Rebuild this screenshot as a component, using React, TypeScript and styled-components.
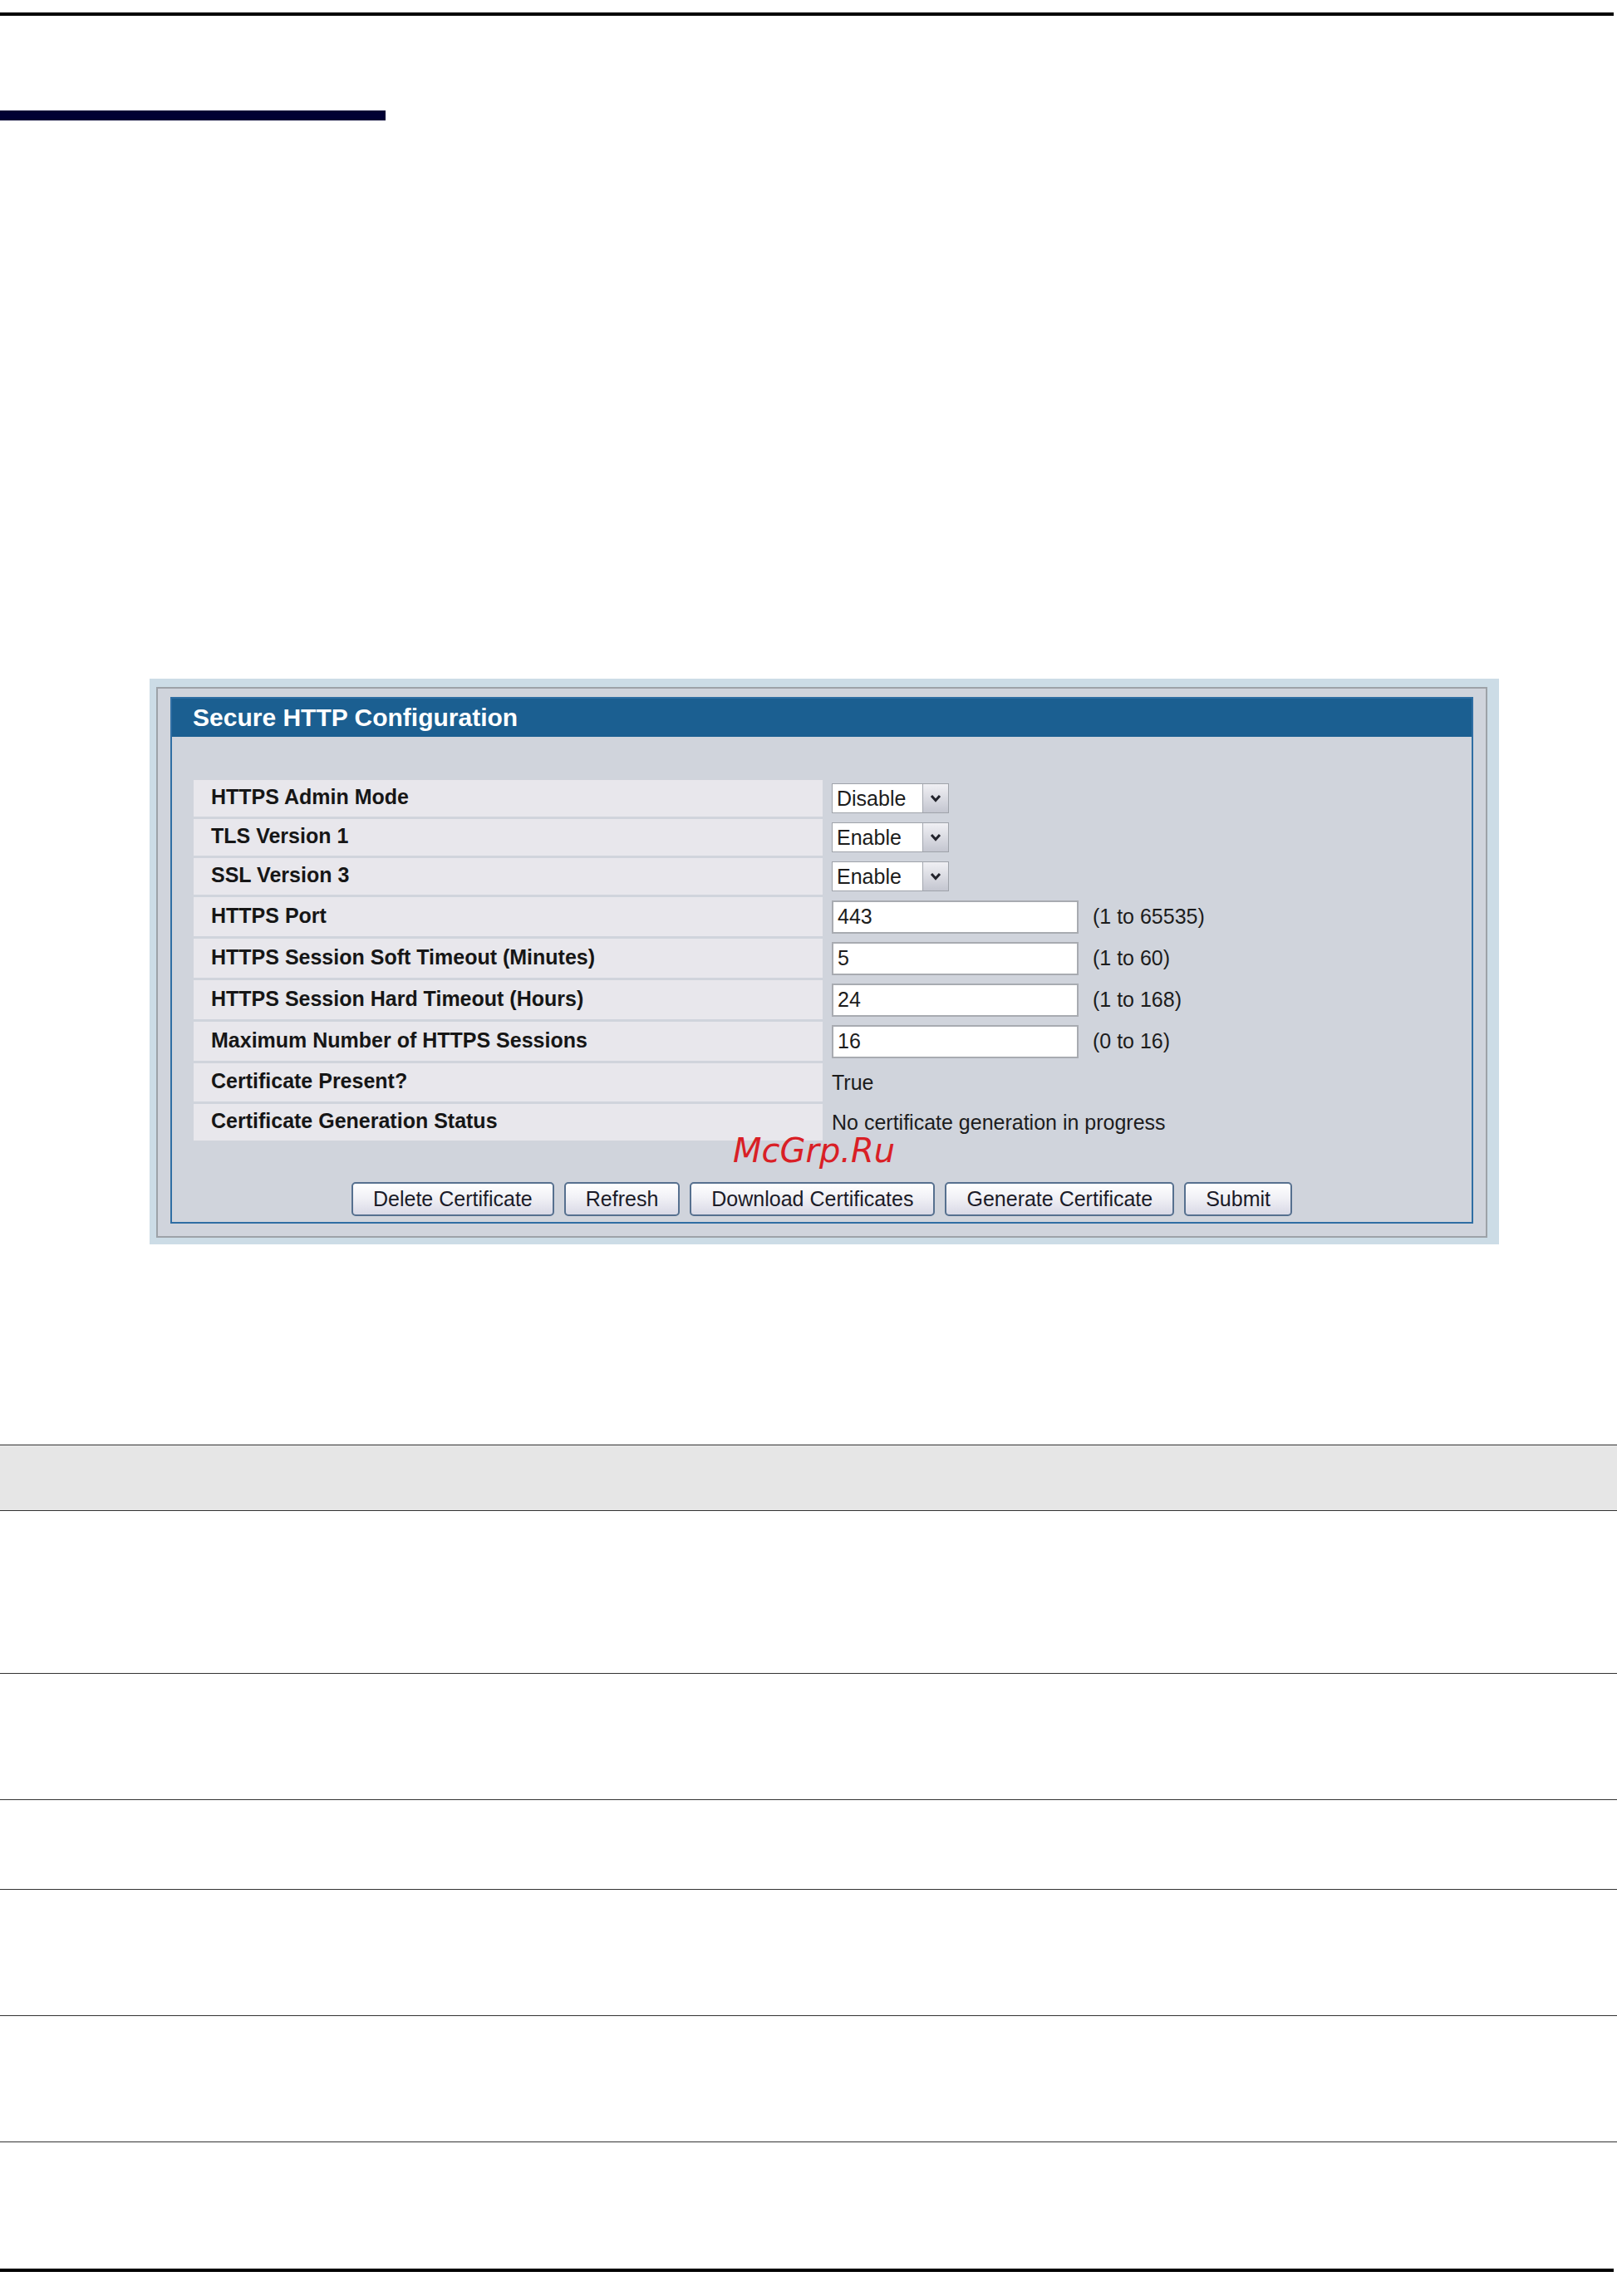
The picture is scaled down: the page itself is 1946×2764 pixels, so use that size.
import React from "react";
import styled, { createGlobalStyle } from "styled-components";

const GlobalStyle = createGlobalStyle`
  html, body {
    margin: 0;
    padding: 0;
    background: #ffffff;
  }
  body {
    font-family: "Liberation Sans", Arial, sans-serif;
    color: #1a1a1a;
  }
`;

type Field =
  | { label: string; kind: "select"; value: string }
  | { label: string; kind: "input"; value: string; hint: string }
  | { label: string; kind: "text"; value: string };

const fields: Field[] = [
  { label: "HTTPS Admin Mode", kind: "select", value: "Disable" },
  { label: "TLS Version 1", kind: "select", value: "Enable" },
  { label: "SSL Version 3", kind: "select", value: "Enable" },
  { label: "HTTPS Port", kind: "input", value: "443", hint: "(1 to 65535)" },
  { label: "HTTPS Session Soft Timeout (Minutes)", kind: "input", value: "5", hint: "(1 to 60)" },
  { label: "HTTPS Session Hard Timeout (Hours)", kind: "input", value: "24", hint: "(1 to 168)" },
  { label: "Maximum Number of HTTPS Sessions", kind: "input", value: "16", hint: "(0 to 16)" },
  { label: "Certificate Present?", kind: "text", value: "True" },
  { label: "Certificate Generation Status", kind: "text", value: "No certificate generation in progress" },
];

const buttons = [
  "Delete Certificate",
  "Refresh",
  "Download Certificates",
  "Generate Certificate",
  "Submit",
];

// heights of the table rows below the screenshot
const docRows = [196, 152, 108, 152, 152, 152];

const rowHeight = (kind: Field["kind"], index: number) => {
  if (kind === "select") return 44;
  if (kind === "input") return 47;
  return index === fields.length - 1 ? 44 : 46;
};

const App: React.FC = () => {
  return (
    <Page>
      <GlobalStyle />
      <TopRule />
      <SectionBar />

      <Screenshot>
        <Frame>
          <Box>
            <BoxHeader>Secure HTTP Configuration</BoxHeader>
            <BoxBody>
              <FieldGrid>
                {fields.map((f, i) => (
                  <React.Fragment key={f.label}>
                    <LabelCell $h={rowHeight(f.kind, i)}>{f.label}</LabelCell>
                    <ValueCell $h={rowHeight(f.kind, i)}>
                      {f.kind === "select" && (
                        <FakeSelect>
                          <SelectText>{f.value}</SelectText>
                          <SelectArrow>
                            <svg width="14" height="10" viewBox="0 0 14 10">
                              <path
                                d="M2 2 L7 7.5 L12 2"
                                fill="none"
                                stroke="#22232b"
                                strokeWidth="3"
                              />
                            </svg>
                          </SelectArrow>
                        </FakeSelect>
                      )}
                      {f.kind === "input" && (
                        <>
                          <TextBox>{f.value}</TextBox>
                          <Hint>{f.hint}</Hint>
                        </>
                      )}
                      {f.kind === "text" && <PlainValue>{f.value}</PlainValue>}
                    </ValueCell>
                  </React.Fragment>
                ))}
              </FieldGrid>
              <ButtonRow>
                {buttons.map((b) => (
                  <FormButton key={b}>{b}</FormButton>
                ))}
              </ButtonRow>
            </BoxBody>
            <Watermark>McGrp.Ru</Watermark>
          </Box>
        </Frame>
      </Screenshot>

      <DocTable>
        <DocHead />
        {docRows.map((h, i) => (
          <DocRow key={i} $h={h} />
        ))}
      </DocTable>
      <BottomRule />
    </Page>
  );
};

const Page = styled.div`
  width: 1946px;
  min-height: 2764px;
  overflow: hidden;
`;

const TopRule = styled.div`
  margin-top: 15px;
  width: 1942px;
  height: 4px;
  background: #000000;
`;

const SectionBar = styled.div`
  margin-top: 114px;
  width: 464px;
  height: 12px;
  background: #000033;
`;

const Screenshot = styled.div`
  margin-top: 672px;
  margin-left: 180px;
  width: 1624px;
  padding: 10px 14px 8px 8px;
  box-sizing: border-box;
  background: #ccdce6;
`;

const Frame = styled.div`
  border: 2px solid #9da2a8;
  background: #d0d4dc;
  padding: 10px 15px 15px 15px;
`;

const Box = styled.div`
  position: relative;
  border: 2px solid #2f6ea3;
  background: #d0d4dc;
`;

const BoxHeader = styled.div`
  height: 46px;
  display: flex;
  align-items: center;
  padding-left: 25px;
  background: #1b5f91;
  color: #ffffff;
  font-size: 30px;
  font-weight: bold;
`;

const BoxBody = styled.div`
  padding: 52px 26px 7px 26px;
`;

const FieldGrid = styled.div`
  display: grid;
  grid-template-columns: 757px 1fr;
  column-gap: 3px;
  row-gap: 3px;
`;

const LabelCell = styled.div<{ $h: number }>`
  height: ${(p) => p.$h}px;
  display: flex;
  align-items: center;
  padding-left: 21px;
  padding-bottom: 3px;
  box-sizing: border-box;
  background: #e8e7ec;
  font-size: 25px;
  font-weight: bold;
  color: #161616;
`;

const ValueCell = styled.div<{ $h: number }>`
  height: ${(p) => p.$h}px;
  display: flex;
  align-items: center;
  padding-left: 8px;
  font-size: 25px;
  color: #1c1c1c;
`;

const FakeSelect = styled.div`
  width: 141px;
  height: 36px;
  box-sizing: border-box;
  display: flex;
  align-items: stretch;
  border: 1px solid #9fa3aa;
  background: #ffffff;
`;

const SelectText = styled.span`
  flex: 1;
  display: flex;
  align-items: center;
  padding-left: 5px;
  font-size: 25px;
`;

const SelectArrow = styled.span`
  width: 30px;
  display: flex;
  align-items: center;
  justify-content: center;
  border-left: 1px solid #a4a8b0;
  background: linear-gradient(#f0f0f4, #c4c6d0);
`;

const TextBox = styled.div`
  width: 297px;
  height: 40px;
  box-sizing: border-box;
  display: flex;
  align-items: center;
  padding-left: 5px;
  border: 2px solid #a8abb1;
  background: #ffffff;
  font-size: 25px;
`;

const Hint = styled.span`
  margin-left: 17px;
`;

const PlainValue = styled.span``;

const ButtonRow = styled.div`
  margin-top: 50px;
  display: flex;
  justify-content: center;
  gap: 12px;
`;

const FormButton = styled.button`
  height: 41px;
  padding: 0 24px;
  border: 2px solid #56708f;
  border-radius: 5px;
  background: linear-gradient(#ffffff 0%, #f1f1f6 45%, #d9d9e6 100%);
  font-family: "Liberation Sans", Arial, sans-serif;
  font-size: 25px;
  color: #1b1b28;
  cursor: pointer;
`;

const Watermark = styled.span`
  position: absolute;
  left: 675px;
  top: 524px;
  font-family: "DejaVu Sans", sans-serif;
  font-style: italic;
  font-size: 40px;
  line-height: 40px;
  color: #d91f26;
`;

const DocTable = styled.div`
  margin-top: 241px;
  display: flex;
  flex-direction: column;
`;

const DocHead = styled.div`
  height: 78px;
  border-top: 1px solid #333333;
  border-bottom: 1px solid #333333;
  background: #e6e6e6;
`;

const DocRow = styled.div<{ $h: number }>`
  height: ${(p) => p.$h - 1}px;
  border-bottom: 1px solid #333333;

  &:last-child {
    border-bottom: none;
    height: ${(p) => p.$h}px;
  }
`;

const BottomRule = styled.div`
  width: 1942px;
  height: 4px;
  background: #000000;
`;

export default App;
